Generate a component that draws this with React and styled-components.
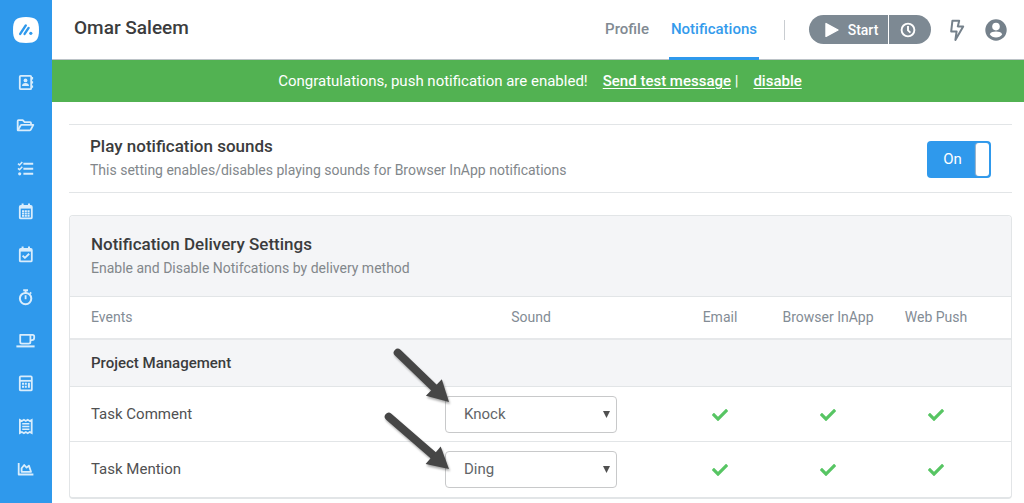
import { useState } from 'react';
import styled, { createGlobalStyle, css } from 'styled-components';
import { FaCheck } from 'react-icons/fa';

const GlobalStyle = createGlobalStyle`
  * {
    box-sizing: border-box;
  }

  body {
    margin: 0;
    background: #ffffff;
    color: #3b3c3d;
    font-family: Roboto, sans-serif;
    font-size: 15px;
    line-height: 20px;
  }
`;

const Page = styled.div`
  display: flex;
  min-height: 100vh;
`;

const Sidebar = styled.nav`
  flex: none;
  width: 52px;
  background: #2f99ec;
  display: flex;
  flex-direction: column;
  align-items: center;
  padding-top: 17px;
`;

const LogoLink = styled.a`
  display: flex;
  width: 26px;
  height: 26px;
  margin-bottom: 17px;
`;

const SideLink = styled.a`
  display: flex;
  align-items: center;
  justify-content: center;
  width: 100%;
  height: 43px;
  color: #d9edfc;
`;

const Main = styled.main`
  flex: 1;
  min-width: 0;
`;

const Header = styled.header`
  display: flex;
  align-items: center;
  height: 60px;
  padding: 0 17px 0 22px;
  border-bottom: 1px solid #bcc3c7;
`;

const UserName = styled.h1`
  margin: 0 auto 0 0;
  padding-bottom: 3px;
  font-size: 19px;
  line-height: 24px;
  font-weight: 500;
`;

const Tabs = styled.nav`
  display: flex;
  gap: 18px;
`;

const Tab = styled.a`
  height: 60px;
  padding: 19px 2px 0;
  border-bottom: 3px solid transparent;
  color: #818a92;
  font-weight: 500;
  text-decoration: none;

  ${({ $active }) =>
    $active &&
    css`
      color: #349bec;
      border-bottom-color: #2f99ec;
    `}
`;

const Divider = styled.span`
  width: 1px;
  height: 20px;
  margin: 0 24px 0 25px;
  background: #c9cdd1;
`;

const Timer = styled.div`
  display: flex;
  gap: 1px;
  margin-right: 18px;
`;

const TimerButton = styled.button`
  display: flex;
  align-items: center;
  justify-content: center;
  gap: 9px;
  height: 29px;
  border: 0;
  padding: 0;
  background: #7d8993;
  color: #ffffff;
  font: 500 14px/20px Roboto, sans-serif;
`;

const StartButton = styled(TimerButton)`
  width: 79px;
  padding-left: 6px;
  border-radius: 15px 0 0 15px;
`;

const ClockButton = styled(TimerButton)`
  width: 42px;
  padding-right: 5px;
  border-radius: 0 15px 15px 0;
`;

const IconButton = styled.button`
  display: flex;
  border: 0;
  padding: 0;
  background: none;
  color: #75818b;

  & + & {
    margin-left: 20px;
  }
`;

const Banner = styled.div`
  display: flex;
  align-items: center;
  justify-content: center;
  gap: 15px;
  height: 42px;
  padding-left: 4px;
  background: #52b252;
  color: #ffffff;
`;

const BannerLink = styled.a`
  color: #ffffff;
  font-weight: 500;
  text-underline-offset: 2px;
`;

const Content = styled.div`
  padding: 22px 12px 5px 17px;
`;

const SoundSetting = styled.section`
  display: flex;
  align-items: center;
  justify-content: space-between;
  height: 69px;
  padding: 0 21px;
  border-top: 1px solid #e2e5e7;
  border-bottom: 1px solid #e2e5e7;
`;

const SoundText = styled.div`
  padding-bottom: 4px;
`;

const SectionTitle = styled.h2`
  margin: 0;
  font-size: 17px;
  line-height: 24px;
  font-weight: 500;
`;

const Hint = styled.p`
  margin: 2px 0 0;
  font-size: 14px;
  line-height: 20px;
  color: #82878b;
`;

const Toggle = styled.label`
  position: relative;
  display: flex;
  flex-direction: ${({ $on }) => ($on ? 'row' : 'row-reverse')};
  width: 64px;
  height: 37px;
  margin-top: 1px;
  padding: 2px;
  border-radius: 4px;
  background: ${({ $on }) => ($on ? '#2f99ec' : '#a5adb3')};
  color: #ffffff;
`;

const ToggleInput = styled.input`
  position: absolute;
  inset: 0;
  width: 100%;
  height: 100%;
  margin: 0;
  opacity: 0;
`;

const ToggleText = styled.span`
  flex: 1;
  align-self: center;
  text-align: center;
`;

const ToggleKnob = styled.span`
  width: 13px;
  border-radius: 3px;
  background: #ffffff;
  box-shadow: -1px 0 1px #a9b8c9;
`;

const Card = styled.section`
  margin-top: 22px;
  border: 1px solid #e2e5e7;
  border-bottom: 2px solid #e2e5e7;
  border-radius: 4px;
`;

const CardHeader = styled.div`
  height: 80px;
  padding: 16px 21px 0;
  border-radius: 4px 4px 0 0;
  background: #f4f5f7;
`;

const Table = styled.table`
  width: 100%;
  border-collapse: collapse;
  table-layout: fixed;
`;

const HeadCell = styled.th`
  width: ${({ $width }) => $width || 'auto'};
  height: 42px;
  padding: 0;
  border-top: 1px solid #e2e5e7;
  color: #838c95;
  font-size: 14px;
  font-weight: 400;
  text-align: center;

  &:first-child {
    padding-left: 21px;
    text-align: left;
  }

  &:last-child {
    padding-right: 21px;
  }
`;

const GroupCell = styled.th`
  height: 48px;
  padding: 0 21px;
  border-top: 2px solid #e6e8ea;
  background: #f4f5f7;
  font-weight: 500;
  text-align: left;
`;

const Cell = styled.td`
  height: 55px;
  padding: 0;
  border-top: 1px solid #e2e5e7;
  text-align: center;
  color: #57c563;

  &:last-child {
    padding-right: 21px;
  }

  svg {
    vertical-align: middle;
  }
`;

const EventCell = styled.th`
  padding: 0 21px;
  border-top: 1px solid #e2e5e7;
  color: #505152;
  font-weight: 400;
  text-align: left;
`;

const SelectBox = styled.div`
  position: relative;
  width: 172px;
  margin: 0 auto;
`;

const Select = styled.select`
  display: block;
  appearance: none;
  width: 100%;
  height: 37px;
  padding: 0 18px;
  border: 1px solid #c8c9ca;
  border-radius: 4px;
  background: #ffffff;
  color: #626568;
  font: 400 15px/20px Roboto, sans-serif;
`;

const Caret = styled.svg`
  position: absolute;
  top: 15px;
  right: 7px;
  pointer-events: none;
`;

const Arrow = styled.svg`
  position: absolute;
  top: -52px;
  left: -66px;
  z-index: 1;
  pointer-events: none;
  filter: drop-shadow(1px 2px 1px rgba(0, 0, 0, 0.35));
`;

const Icon = ({ children }) => (
  <svg
    width="24"
    height="24"
    viewBox="0 0 24 24"
    fill="none"
    stroke="currentColor"
    strokeWidth="1.8"
    strokeLinejoin="round"
    aria-hidden="true"
  >
    {children}
  </svg>
);

const Logo = () => (
  <svg width="26" height="26" viewBox="0 0 26 26" aria-hidden="true">
    <path
      d="M13 0C23 0 26 3 26 13S23 26 13 26S0 23 0 13S3 0 13 0Z"
      fill="#ffffff"
    />
    <g stroke="#2f99ec" strokeWidth="2.4" strokeLinecap="round">
      <path d="M7.2 16.9L12.8 8.4M11.6 16.9L15.6 10.9" />
    </g>
    <circle cx="17.8" cy="16.3" r="1.6" fill="#2f99ec" />
  </svg>
);

const menu = [
  {
    label: 'Contacts',
    icon: (
      <Icon>
        <rect x="5.8" y="5.8" width="11.4" height="13.4" rx="1" />
        <path d="M18.4 7v2.4M18.4 11.2v2.4M18.4 15.4v2.4" strokeWidth="1.4" />
        <circle cx="11.5" cy="10.4" r="1.9" fill="currentColor" stroke="none" />
        <path
          d="M8 16c0-2 1.4-3 3.5-3s3.5 1 3.5 3z"
          fill="currentColor"
          stroke="none"
        />
      </Icon>
    ),
  },
  {
    label: 'Projects',
    icon: (
      <Icon>
        <path d="M3.7 17.3V8a.8.8 0 0 1 .8-.8h4.2l1.9 2h5.6a.8.8 0 0 1 .8.8v1.7" />
        <path d="M3.8 17.3L6.8 12.3a1 1 0 0 1 .8-.5H19.3L16.8 16.7a1 1 0 0 1-.9.6Z" />
      </Icon>
    ),
  },
  {
    label: 'Tasks',
    icon: (
      <Icon>
        <path d="M9.4 7.8H19.2M9.4 12.8H19.2M9.4 17.8H19.2" strokeWidth="2" />
        <path d="M4 7.6L5.5 9L8.3 6M4 12.4L5.5 13.8L8.3 10.8" strokeWidth="1.5" />
        <circle cx="5.7" cy="17.8" r="1.6" fill="currentColor" stroke="none" />
      </Icon>
    ),
  },
  {
    label: 'Calendar',
    icon: (
      <Icon>
        <rect x="5.8" y="7" width="12" height="12.4" rx="1" />
        <path d="M5.8 8.3H17.8" strokeWidth="2.6" />
        <path d="M8.6 4.4V7M15 4.4V7" strokeWidth="2" />
        <path
          d="M8 12.1h7.6M8 14.5h7.6M8 16.9h7.6"
          strokeWidth="1.8"
          strokeDasharray="2.1 .65"
        />
      </Icon>
    ),
  },
  {
    label: 'Schedule',
    icon: (
      <Icon>
        <rect x="5.8" y="7" width="12" height="12.4" rx="1" />
        <path d="M5.8 8.3H17.8" strokeWidth="2.6" />
        <path d="M8.6 4.4V7M15 4.4V7" strokeWidth="2" />
        <path d="M8.6 13.6L10.9 15.9L15.2 11.7" strokeWidth="1.9" />
      </Icon>
    ),
  },
  {
    label: 'Timers',
    icon: (
      <Icon>
        <circle cx="11.6" cy="13.6" r="5.7" strokeWidth="2" />
        <path d="M9.2 5.2H14M11.6 5.2V8M16 8.6L17.2 7.4" strokeWidth="1.9" />
        <path d="M11.6 10.2V14.2" />
      </Icon>
    ),
  },
  {
    label: 'Leaves',
    icon: (
      <Icon>
        <path d="M6.2 6.8H16.4V14a1.6 1.6 0 0 1-1.6 1.6H7.8A1.6 1.6 0 0 1 6.2 14Z" />
        <path d="M16.4 6.8H18.6A1.6 1.6 0 0 1 20.2 8.4V9.8A2.4 2.4 0 0 1 17.8 12.2H16.4" />
        <path d="M2.4 18.4H20.6" strokeWidth="2" />
      </Icon>
    ),
  },
  {
    label: 'Accounting',
    icon: (
      <Icon>
        <rect x="5.8" y="5.4" width="12" height="14" rx="1" />
        <path d="M5.8 9.8H17.8" />
        <path d="M8 12.8h5M8 15.8h5" strokeWidth="2" strokeDasharray="2 .8" />
        <path d="M14.9 11.8V16.8" strokeWidth="2" />
      </Icon>
    ),
  },
  {
    label: 'Invoices',
    icon: (
      <Icon>
        <path
          d="M5.9 6V19L7.9 18L9.9 19.2L11.8 18L13.7 19.2L15.7 18L17.7 19V6L15.7 7L13.7 5.8L11.8 7L9.9 5.8L7.9 7Z"
          strokeLinejoin="miter"
        />
        <path d="M8.2 9.8H15.4M8.2 12.5H15.4M8.2 15.2H15.4" strokeWidth="1.5" />
      </Icon>
    ),
  },
  {
    label: 'Reports',
    icon: (
      <Icon>
        <path d="M4.7 6V17.5H19.4" />
        <path d="M7.6 14.8V11.2L10.2 8L12.6 10.6L14.9 8.6L17 14.8Z" />
      </Icon>
    ),
  },
];

// x and y are the distance from tail to tip, drop is how far down the tip sits
const PointerArrow = ({ x, y, drop }) => {
  const length = Math.hypot(x, y);
  const angle = (Math.atan2(y, x) * 180) / Math.PI;
  return (
    <Arrow width="80" height="90" viewBox="0 0 80 90" aria-hidden="true">
      <g transform={`translate(70 ${52 + drop}) rotate(${angle})`} fill="#464646">
        <rect x={-length - 3} y="-4" width={length - 12} height="8" rx="4" />
        <path d="M0 0L-21 -11.5V11.5Z" />
      </g>
    </Arrow>
  );
};

const events = [
  { name: 'Task Comment', sound: 'Knock', arrow: { x: 52, y: 50, drop: 6 } },
  { name: 'Task Mention', sound: 'Ding', arrow: { x: 61, y: 53, drop: 18 } },
];

const channels = ['Email', 'Browser InApp', 'Web Push'];

const SoundSelect = ({ event }) => (
  <SelectBox>
    <Select defaultValue={event.sound} aria-label={`${event.name} sound`}>
      <option>Knock</option>
      <option>Ding</option>
    </Select>
    <Caret width="7" height="7" viewBox="0 0 7 7" aria-hidden="true">
      <path d="M0 0H7L3.5 7Z" fill="#505050" />
    </Caret>
    <PointerArrow {...event.arrow} />
  </SelectBox>
);

const App = () => {
  const [soundsOn, setSoundsOn] = useState(true);

  return (
    <Page>
      <GlobalStyle />
      <Sidebar>
        <LogoLink href="#home" aria-label="Home">
          <Logo />
        </LogoLink>
        {menu.map((item) => (
          <SideLink key={item.label} href="#" aria-label={item.label}>
            {item.icon}
          </SideLink>
        ))}
      </Sidebar>
      <Main>
        <Header>
          <UserName>Omar Saleem</UserName>
          <Tabs>
            <Tab href="#profile">Profile</Tab>
            <Tab href="#notifications" $active>
              Notifications
            </Tab>
          </Tabs>
          <Divider />
          <Timer>
            <StartButton type="button">
              <svg width="14" height="16" viewBox="0 0 14 16" aria-hidden="true">
                <path
                  d="M1 1.6V14.4L13 8Z"
                  fill="#ffffff"
                  stroke="#ffffff"
                  strokeWidth="1.4"
                  strokeLinejoin="round"
                />
              </svg>
              Start
            </StartButton>
            <ClockButton type="button" aria-label="Timer history">
              <svg
                width="16"
                height="16"
                viewBox="0 0 16 16"
                fill="none"
                stroke="#ffffff"
                strokeWidth="1.9"
                aria-hidden="true"
              >
                <circle cx="8" cy="8" r="6.4" />
                <path d="M8 4V8.4L10.4 10.6" />
              </svg>
            </ClockButton>
          </Timer>
          <IconButton type="button" aria-label="Activity">
            <svg
              width="16"
              height="22"
              viewBox="0 0 16 22"
              fill="none"
              stroke="currentColor"
              strokeWidth="2"
              strokeLinejoin="round"
              aria-hidden="true"
            >
              <path d="M3.4 1.8H10.2L8.8 7.4H14.2L6.4 21L7.6 12.4H2.2Z" />
            </svg>
          </IconButton>
          <IconButton type="button" aria-label="Account">
            <svg width="22" height="22" viewBox="0 0 22 22" aria-hidden="true">
              <circle cx="11" cy="11" r="10.7" fill="currentColor" />
              <circle cx="11" cy="7.6" r="3.8" fill="#ffffff" />
              <path
                d="M4.8 15.2C5.8 13.2 8.4 12.6 11 12.6S16.2 13.2 17.2 15.2C15.8 17.3 13.6 18.4 11 18.4S6.2 17.3 4.8 15.2Z"
                fill="#ffffff"
              />
            </svg>
          </IconButton>
        </Header>
        <Banner>
          <span>Congratulations, push notification are enabled!</span>
          <span>
            <BannerLink href="#test">Send test message</BannerLink> |
          </span>
          <BannerLink href="#disable">disable</BannerLink>
        </Banner>
        <Content>
          <SoundSetting>
            <SoundText>
              <SectionTitle>Play notification sounds</SectionTitle>
              <Hint>
                This setting enables/disables playing sounds for Browser InApp notifications
              </Hint>
            </SoundText>
            <Toggle $on={soundsOn}>
              <ToggleInput
                type="checkbox"
                aria-label="Play notification sounds"
                checked={soundsOn}
                onChange={(e) => setSoundsOn(e.target.checked)}
              />
              <ToggleText>{soundsOn ? 'On' : 'Off'}</ToggleText>
              <ToggleKnob />
            </Toggle>
          </SoundSetting>
          <Card>
            <CardHeader>
              <SectionTitle>Notification Delivery Settings</SectionTitle>
              <Hint>Enable and Disable Notifcations by delivery method</Hint>
            </CardHeader>
            <Table>
              <thead>
                <tr>
                  <HeadCell>Events</HeadCell>
                  <HeadCell $width="270px">Sound</HeadCell>
                  <HeadCell $width="108px">{channels[0]}</HeadCell>
                  <HeadCell $width="108px">{channels[1]}</HeadCell>
                  <HeadCell $width="129px">{channels[2]}</HeadCell>
                </tr>
              </thead>
              <tbody>
                <tr>
                  <GroupCell colSpan={5}>Project Management</GroupCell>
                </tr>
                {events.map((event) => (
                  <tr key={event.name}>
                    <EventCell scope="row">{event.name}</EventCell>
                    <Cell>
                      <SoundSelect event={event} />
                    </Cell>
                    {channels.map((channel) => (
                      <Cell key={channel}>
                        <FaCheck size={16} role="img" aria-label={`${channel} enabled`} />
                      </Cell>
                    ))}
                  </tr>
                ))}
              </tbody>
            </Table>
          </Card>
        </Content>
      </Main>
    </Page>
  );
};

export default App;
